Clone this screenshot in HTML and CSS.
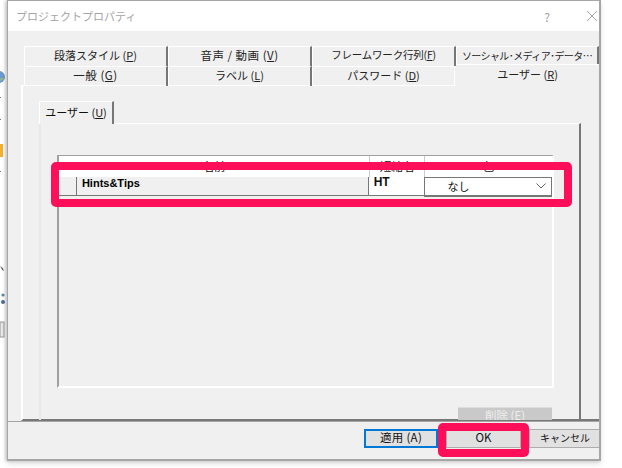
FILE: index.html
```html
<!DOCTYPE html>
<html lang="ja">
<head>
<meta charset="utf-8">
<title>プロジェクトプロパティ</title>
<link rel="stylesheet" href="styles.css">
</head>
<body>
<div class="desk">
  <svg class="side-icons" width="7" height="350" viewBox="0 0 7 350">
    <circle cx="-1" cy="77" r="6" fill="#6d9bc9"/>
    <path d="M-5 78a6 6 0 0 0 10 0z" fill="#8fb39a"/>
    <rect x="0" y="97" width="1" height="1" fill="#777"/>
    <rect x="0" y="119" width="1" height="1" fill="#777"/>
    <rect x="0" y="144" width="3" height="13" fill="#f0b030"/>
    <rect x="0" y="171" width="1" height="1" fill="#777"/>
    <path d="M0 266l3 2 1 3-2-1z" fill="#777"/>
    <circle cx="3" cy="295" r="1.6" fill="#5f86ad"/>
    <circle cx="3" cy="302" r="2" fill="#4a7099"/>
    <rect x="0" y="322" width="4" height="15" fill="#e8e8e8" stroke="#999"/>
  </svg>
  <section class="dialog">
    <header class="title">
      <span class="title-text">プロジェクトプロパティ</span>
      <span class="help">?</span>
      <svg class="close" width="10" height="10" viewBox="0 0 10 10"><path d="M0 0l10 10M10 0L0 10" stroke="#a8a8a8" fill="none"/></svg>
    </header>
    <div class="content">
      <div class="tabs">
        <div class="tab">段落スタイル (<u>P</u>)</div>
        <div class="tab tab-wide">音声 / 動画 (<u>V</u>)</div>
        <div class="tab tab-narrow">フレームワーク行列(<u>F</u>)</div>
        <div class="tab tab-social">ソーシャル･メディア･データ…</div>
        <div class="tab tab-wide">一般 (<u>G</u>)</div>
        <div class="tab">ラベル (<u>L</u>)</div>
        <div class="tab">パスワード (<u>D</u>)</div>
        <div class="tab active">ユーザー (<u>R</u>)</div>
      </div>
      <div class="panel">
        <div class="subtab">ユーザー (<u>U</u>)</div>
        <div class="subpanel">
          <div class="table">
            <div class="thead">
              <div class="th th-name">名前</div>
              <div class="th th-short">短縮名</div>
              <div class="th th-color">色</div>
            </div>
            <div class="row">
              <div class="td td-mark"></div>
              <div class="td td-name">Hints&amp;Tips</div>
              <div class="td td-short">HT</div>
              <div class="select">
                <span>なし</span>
                <svg width="10" height="6" viewBox="0 0 10 6"><path d="M0.5 0.5L5 5l4.5-4.5" stroke="#666" fill="none"/></svg>
              </div>
            </div>
          </div>
          <div class="del">削除 (<span class="e">E</span>)</div>
        </div>
      </div>
      <footer class="buttons">
        <div class="btn apply">適用 (A)</div>
        <div class="btn ok">OK</div>
        <div class="btn cancel">キャンセル</div>
      </footer>
    </div>
  </section>
  <div class="mark mark-row"></div>
  <div class="mark mark-ok"></div>
</div>
</body>
</html>
```
FILE: styles.css
```css
* { box-sizing: border-box; }
html, body { margin: 0; padding: 0; background: #fff; }
body { font-family: "Noto Sans CJK JP", "Liberation Sans", sans-serif; font-size: 12px; color: #111; }
.desk { position: relative; width: 622px; height: 468px; overflow: hidden; background: #fff; }
.side-icons { position: absolute; left: 0; top: 0; }
.dialog {
  position: absolute; left: 7px; top: 0; width: 594px; height: 461px;
  border: 1px solid #a6a6a6; border-width: 1px 2px 2px 1px;
  background: #f0f0f0; box-shadow: -2px 0 3px rgba(0,0,0,.18), 0 3px 5px rgba(0,0,0,.12);
  display: flex; flex-direction: column; overflow: hidden;
}
.title { height: 30px; flex: none; background: #fff; display: flex; align-items: center; padding: 0 2px 0 8px; }
.title-text { font-size: 11px; color: #a4a4a4; flex: 1; }
.help { font-size: 12px; color: #a0a0a0; margin-right: 37px; }
.content { flex: 1; display: flex; flex-direction: column; padding-top: 15px; min-height: 0; }
.tabs {
  display: grid; grid-template-columns: 144px 144px 144px 143px; grid-auto-rows: 20px;
  margin-left: 16px; flex: none; height: 40px; position: relative; z-index: 1;
}
.tab {
  display: flex; align-items: center; justify-content: center; font-size: 11px; white-space: nowrap;
  border-top: 1px solid #fff; border-left: 1px solid #fff; border-right: 2px solid #777; color: #222;
  line-height: 1; overflow: hidden; padding-bottom: 2px;
}
.tab-wide { font-size: 11.5px; letter-spacing: .5px; }
.tab-narrow { font-size: 10.5px; letter-spacing: -.2px; }
.tab-social { font-size: 10px; letter-spacing: -.6px; }
.tab:nth-child(7) { border-right: 1px solid #fff; margin-right: 1px; }
.tab.active { border: 0; border-top: 1px solid #fff; margin-top: -2px; height: 23px; background: #f0f0f0; position: relative; padding-bottom: 4px; }
.panel {
  margin-left: 13px; flex: none; height: 336px; border-top: 1px solid #fff; border-left: 2px solid #fff;
  border-bottom: 2px solid #777; padding: 15px 0 0 16px; margin-top: -1px;
}
.subtab {
  width: 75px; height: 23px; border: 1px solid #fff; border-bottom: 0; border-right: 2px solid #777;
  display: flex; align-items: center; justify-content: center; font-size: 11px; line-height: 1;
  position: relative; z-index: 1; background: #f0f0f0; padding-bottom: 2px;
}
.subpanel {
  width: 542px; height: 297px; margin-top: -1px; border-top: 1px solid #fff; border-left: 2px solid #e8e8e8;
  border-right: 2px solid #777; padding: 31px 0 0 16px; position: relative; clip-path: inset(0 0 0 0);
}
.table {
  height: 233px; width: 497px; border-top: 1px solid #a0a0a0; border-left: 2px solid #a0a0a0;
  border-bottom: 2px solid #fff; border-right: 2px solid #fff;
}
.thead { display: flex; height: 21px; background: #fff; }
.th { text-align: center; font-size: 11.5px; line-height: 20px; border-right: 1px solid #ccc; }
.th-name { width: 311px; }
.th-short { width: 55px; }
.th-color { flex: 1; border: 0; }
.row { display: flex; height: 20px; align-items: flex-start; }
.td { height: 19px; border-bottom: 1px solid #777; }
.td-mark { width: 18px; border-right: 1px solid #777; }
.td-name { width: 293px; font-family: "Liberation Sans", sans-serif; font-weight: 700; font-size: 11px; line-height: 13px; padding-left: 5px; border-right: 1px solid #777; color: #000; }
.td-short { width: 56px; background: #fff; font-family: "Liberation Sans", sans-serif; font-weight: 700; font-size: 12px; padding-left: 5px; line-height: 11px; color: #111; }
.select {
  width: 128px; height: 20px; background: #fff; border: 1px solid #777; border-bottom-width: 2px;
  display: flex; align-items: center; justify-content: space-between; padding: 0 5px 2px 22px; font-size: 11px;
}
.del {
  position: absolute; left: 417px; top: 283px; width: 94px; height: 18px; background: #c9c9c9; border-top: 1px solid #ddd;
  color: #eee; text-align: center; font-size: 11.5px; line-height: 15px;
}
.buttons { flex: 1; border-top: 1px solid #a6a6a6; display: flex; padding: 7px 0 0 356px; align-items: flex-start; position: relative; background: #f0f0f0; }
.btn { flex: none; height: 19px; background: #e1e1e1; font-size: 11.5px; display: flex; align-items: center; justify-content: center; border: 1px solid #adadad; line-height: 1; padding-bottom: 2px; }
.apply { width: 74px; border: 2px solid #0078d7; letter-spacing: .3px; }
.ok { width: 75px; margin-left: 8px; }
.cancel { width: 75px; margin-left: 8px; font-size: 10px; justify-content: flex-start; padding-left: 10px; }
.mark { position: absolute; border: 8px solid #ff0f5a; border-radius: 5px; }
.mark-row { left: 51px; top: 162px; width: 521px; height: 45px; }
.mark-ok { left: 438px; top: 423px; width: 91px; height: 34px; }
```
